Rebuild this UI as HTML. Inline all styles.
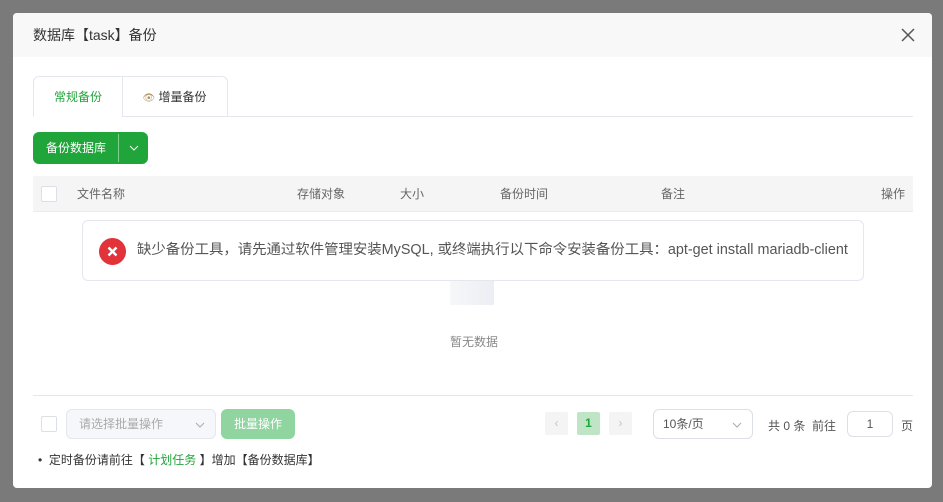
<!DOCTYPE html>
<html><head><meta charset="utf-8"><style>
*{box-sizing:border-box;margin:0;padding:0}
body{width:943px;height:502px;background:#7a7a7a;font-family:"Liberation Sans","Noto Sans CJK SC",sans-serif;position:relative;overflow:hidden;font-size:12px;color:#555}
.dlg{position:absolute;left:13px;top:13px;width:919px;height:475px;background:#fff;border-radius:4px;overflow:hidden}
.hd{height:44px;background:#f8f8f8;padding-left:20px;line-height:44px;font-size:14px;color:#333}
.x{position:absolute;right:16px;top:14px}
.tabs{position:absolute;left:20px;top:63px;width:880px;height:41px;border-bottom:1px solid #e4e7ed}
.tab{position:absolute;top:0;height:41px;line-height:40px;text-align:center;border:1px solid #e4e7ed;font-size:12px}
.t1{left:0;width:90px;color:#20a53a;border-bottom:1px solid #fff;border-radius:6px 0 0 0;background:#fff}
.t2{left:89px;width:106px;color:#333;border-left:none;border-radius:0 6px 0 0}
.btn{position:absolute;left:20px;top:119px;width:115px;height:32px;background:#20a53a;border-radius:6px;color:#fff;font-size:12px;line-height:32px}
.btn span{position:absolute;left:13px}
.btn i{position:absolute;left:85px;top:2px;width:1px;height:28px;background:#7fd08f}
.th{position:absolute;left:20px;top:163px;width:880px;height:36px;background:#f5f5f5;border-bottom:1px solid #ececec;line-height:36px;color:#666}
.th span{position:absolute}
.cb{position:absolute;width:16px;height:16px;border:1px solid #dcdfe6;background:#fff;border-radius:2px}
.msg{position:absolute;left:69px;top:207px;width:782px;height:61px;border:1px solid #e4e7ed;border-radius:6px;background:#fff;font-size:14.4px;color:#555;line-height:59px;padding-left:54px;white-space:nowrap}
.ic{position:absolute;left:16px;top:17px;width:27px;height:27px;border-radius:50%;background:#e2323a}
.ic svg{display:block}
.empty{position:absolute;left:437px;top:268px;width:44px;height:24px;background:linear-gradient(90deg,#f6f7f9,#eceef3)}
.nd{position:absolute;left:437px;top:320px;color:#888}
.sep{position:absolute;left:20px;top:382px;width:880px;height:1px;background:#e4e7ed}
.sel{position:absolute;left:53px;top:396px;width:150px;height:30px;border:1px solid #e4e7ed;border-radius:6px;background:#f5f7fa;color:#aaa;line-height:28px;padding-left:12px}
.bb{position:absolute;left:208px;top:396px;width:74px;height:30px;background:#90d4a0;border-radius:6px;color:#fff;line-height:30px;text-align:center}
.pg{position:absolute;top:399px;width:23px;height:23px;background:#f4f4f5;border-radius:2px;text-align:center;line-height:23px;color:#c0c4cc}
.ps{position:absolute;left:640px;top:396px;width:100px;height:30px;border:1px solid #dcdfe6;border-radius:6px;line-height:28px;padding-left:9px;color:#555}
.in{position:absolute;left:834px;top:398px;width:46px;height:26px;border:1px solid #dcdfe6;border-radius:6px;text-align:center;line-height:24px}
.note{position:absolute;left:25px;top:438px;color:#333}
</style></head><body>
<div class="dlg">
<div class="hd">数据库【task】备份</div>
<svg class="x" width="16" height="16" viewBox="0 0 16 16"><path d="M2 2L14 14M14 2L2 14" stroke="#555" stroke-width="1.5"/></svg>
<div class="tabs"><div class="tab t1">常规备份</div><div class="tab t2"><span style="color:#b09060;font-size:10px">👁</span> 增量备份</div></div>
<div class="btn"><span>备份数据库</span><i></i><svg style="position:absolute;left:96px;top:11px" width="10" height="10" viewBox="0 0 10 10"><path d="M1 3L5 7L9 3" stroke="#fff" fill="none"/></svg></div>
<div class="th"><div class="cb" style="left:8px;top:10px"></div><span style="left:44px">文件名称</span><span style="left:264px">存储对象</span><span style="left:367px">大小</span><span style="left:467px">备份时间</span><span style="left:628px">备注</span><span style="left:848px">操作</span></div>
<div class="empty"></div>
<div class="nd">暂无数据</div>
<div class="msg"><div class="ic"><svg width="27" height="27" viewBox="0 0 27 27"><path d="M9.5 9.5L17.5 17.5M17.5 9.5L9.5 17.5" stroke="#fff" stroke-width="2.5"/></svg></div>缺少备份工具，请先通过软件管理安装MySQL, 或终端执行以下命令安装备份工具：apt-get install mariadb-client</div>
<div class="sep"></div>
<div class="cb" style="left:28px;top:403px"></div>
<div class="sel">请选择批量操作<svg style="position:absolute;right:10px;top:10px" width="10" height="10" viewBox="0 0 10 10"><path d="M1 3L5 7L9 3" stroke="#aaa" fill="none"/></svg></div>
<div class="bb">批量操作</div>
<div class="pg" style="left:532px">‹</div>
<div class="pg" style="left:564px;background:#bfe5c6;color:#20a53a;font-weight:bold">1</div>
<div class="pg" style="left:596px">›</div>
<div class="ps">10条/页<svg style="position:absolute;right:10px;top:10px" width="10" height="10" viewBox="0 0 10 10"><path d="M1 3L5 7L9 3" stroke="#aaa" fill="none"/></svg></div>
<div style="position:absolute;left:755px;top:404px;color:#555">共 0 条&nbsp; 前往</div>
<div class="in">1</div>
<div style="position:absolute;left:888px;top:404px;color:#555">页</div>
<div class="note">•&nbsp; 定时备份请前往【 <span style="color:#20a53a">计划任务</span> 】增加【备份数据库】</div>
</div>
</body></html>
